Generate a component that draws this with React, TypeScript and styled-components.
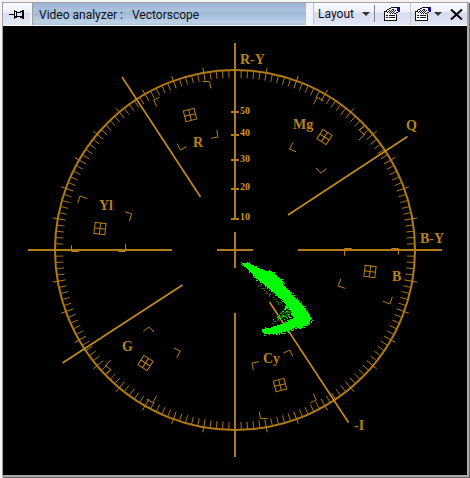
import React from "react";
import styled, { createGlobalStyle } from "styled-components";

const GlobalStyle = createGlobalStyle`
  *, *::before, *::after { box-sizing: border-box; }
  html, body, #root { height: 100%; }
  body { margin: 0; background: #fff; overflow: hidden; }
`;

const Page = styled.div`
  min-height: 100%;
  padding: 2px 0 0 2px;
  background: #f4f4f4;
`;

const Panel = styled.section`
  display: flex;
  flex-direction: column;
  border: 1px solid #a0a0a0;
  border-right: 2px solid #aaaaaa;
  border-bottom: 2px solid #a8a8a8;
  box-shadow: 1px 1px 0 #686868;
  margin-right: 1px;
  background: #000;
`;

const Toolbar = styled.header`
  display: flex;
  align-items: stretch;
  height: 23px;
  background: #f4f5fb;
  border-bottom: 1px solid #fff;
  font: 12px/22px Roboto, "Open Sans", sans-serif;
  color: #101014;
`;

const Group = styled.div`
  display: flex;
  align-items: stretch;
  background: linear-gradient(#fafbff 0%, #eef0fa 40%, #d6dbee 45%, #e0e5f5 100%);
  border-left: 1px solid #c4c6cc;
`;

const ToolButton = styled.button<{ $width: number; $gap?: number }>`
  display: flex;
  align-items: center;
  justify-content: center;
  gap: ${(p) => p.$gap ?? 0}px;
  width: ${(p) => p.$width}px;
  padding: 0;
  border: 0;
  background: transparent;
  font: inherit;
  color: inherit;
`;

const PinButton = styled(ToolButton)`
  background: linear-gradient(#fafbff 0%, #eef0fa 40%, #dce0f2 45%, #e0e5f5 100%);
`;

const Title = styled.h1`
  display: flex;
  flex: 1;
  gap: 9px;
  min-width: 0;
  margin: 0 7px 0 2px;
  padding: 0 6px;
  border-left: 1px solid #a0a0a0;
  font: inherit;
  line-height: 24px;
  white-space: nowrap;
  background: linear-gradient(#a0b0c8 0%, #9db8d8 8%, #abc3de 35%, #9fbad9 45%, #bed2e6 90%, #aac0da 100%);
`;

const Divider = styled.span`
  width: 1px;
  margin: 2px 0 3px;
  background: #85878f;
`;

const Scope = styled.svg`
  display: block;
  width: 100%;
  height: auto;
`;

const AxisLabel = styled.text`
  font: bold 14px "Liberation Serif", serif;
  fill: #b8811c;
`;

const ScaleLabel = styled.text`
  font: bold 10px "Liberation Serif", serif;
  fill: #d29322;
`;

const CX = 235;
const CY = 250;
const RADIUS = 180;

const ring = (from: number, to: number, keep: (d: number) => boolean) =>
  Array.from({ length: 180 }, (_, i) => i * 2)
    .filter(keep)
    .map((d) => {
      const c = Math.cos((d * Math.PI) / 180);
      const s = Math.sin((d * Math.PI) / 180);
      return `M${(CX + c * from).toFixed(2)} ${(CY + s * from).toFixed(2)}L${(CX + c * to).toFixed(2)} ${(CY + s * to).toFixed(2)}`;
    })
    .join("");

const minorTicks = ring(172, 180, (d) => d % 10 !== 0 && d % 90 !== 0);
const majorTicks = ring(172, 185, (d) => d % 10 === 0 && d % 90 !== 0);

const AXES =
  "M235 43V219M235 232V268M235 313V457M28 250H172M217 250H253M298 250H442" +
  "M231 112H239M231 135H239M231 160H239M231 189H239M231 219H239";

const DIAGONALS = "M122 77L200.5 197M269.5 302L348.5 422.5M288 215L407.5 136.5M62.5 363L182.5 285";

const BRACKETS =
  "M202.5 81.5L209.7 81.7L210.7 88.5M159.5 97.3L153.7 100L156.7 106.3" +
  "M177.3 143.7L180.3 150L186.7 146.7M216.7 130L218 137L211 138.3" +
  "M313.3 104.3L317.3 97.3L323.3 100.7M364 126.7L359.3 130.3L364.7 134.7L359 140" +
  "M293.3 142.3L289.5 149L296 151.8M316 168L321 173.2L326.5 168.5" +
  "M344.5 255.7V248.5H351.7M391.3 248.5H398.5V254.7" +
  "M340.7 279L338.3 286L345 288.3M382.7 301.3L390 304L392.3 296.7";

const targets = [
  { x: 190, y: 115, angle: -14 },
  { x: 324.5, y: 137, angle: 33 },
  { x: 370, y: 271.5, angle: 7 },
];

const labels = [
  { x: 240, y: 64, text: "R-Y" },
  { x: 420, y: 243, text: "B-Y" },
  { x: 406, y: 130, text: "Q" },
  { x: 354, y: 430, text: "-I" },
  { x: 193, y: 147, text: "R" },
  { x: 293, y: 129, text: "Mg" },
  { x: 392, y: 281, text: "B" },
  { x: 263, y: 363, text: "Cy" },
  { x: 122, y: 351, text: "G" },
  { x: 99, y: 210, text: "Yl" },
];

const scale = [
  { y: 114, text: "50" },
  { y: 136, text: "40" },
  { y: 162, text: "30" },
  { y: 190, text: "20" },
  { y: 220, text: "10" },
];

const outline: [number, number][] = [
  [241, 263], [248, 263], [256, 267], [266, 271], [272, 271], [274, 275], [281, 279],
  [284, 286], [291, 293], [296, 299], [304, 307], [308, 313], [311, 319], [309, 323],
  [301, 328], [294, 327], [291, 330], [276, 334], [264, 334], [262, 329], [269, 328],
  [279, 325], [287, 322], [294, 318], [291, 311], [286, 304], [280, 298], [272, 291],
  [266, 286], [258, 280], [250, 271], [243, 265],
];

const buildTrace = () => {
  let seed = 17;
  const random = () => {
    seed = (seed * 1103515245 + 12345) % 2147483648;
    return seed / 2147483648;
  };
  let bright = "";
  let dim = "";
  outline.forEach(([x, y], i) => {
    const [nx, ny] = outline[(i + 1) % outline.length];
    const steps = Math.ceil(Math.hypot(nx - x, ny - y));
    for (let k = 0; k < steps; k++) {
      const px = Math.round(x + ((nx - x) * k) / steps + (random() - 0.5) * 2.4);
      const py = Math.round(y + ((ny - y) * k) / steps + (random() - 0.5) * 2.4);
      bright += `M${px} ${py}h1v1h-1z`;
    }
  });
  for (let i = 0; i < 150; i++) {
    const t = random();
    const px = Math.round(291 - random() * (3 + t * 18));
    const py = Math.round(303 + t * 20);
    if (i % 3 === 0) bright += `M${px} ${py}h1v1h-1z`;
    else dim += `M${px} ${py}h1v1h-1z`;
  }
  for (let i = 0; i < 30; i++) {
    const t = random();
    dim += `M${Math.round(260 + t * 23 - random() * 3)} ${Math.round(284 + t * 21 + random() * 2)}h1v1h-1z`;
  }
  return { bright, dim };
};

const trace = buildTrace();
const traceShape = `M${outline.map((p) => p.join(" ")).join("L")}Z`;

const Graticule = () => (
  <g fill="none" stroke="#b07a16">
    <circle cx={CX} cy={CY} r={RADIUS} strokeWidth="2" />
    <path d={minorTicks} stroke="#a87414" />
    <path d={majorTicks} stroke="#b98118" />
    <path d={AXES} strokeWidth="2" shapeRendering="crispEdges" />
    <path d={DIAGONALS} stroke="#c68c1d" strokeWidth="1.6" />
    {[0, 180].map((turn) => (
      <g key={turn} transform={`rotate(${turn} ${CX} ${CY})`} stroke="#b98118">
        <path d={BRACKETS} />
        {targets.map((t) => (
          <path
            key={t.x}
            transform={`translate(${t.x} ${t.y}) rotate(${t.angle})`}
            d="M-5.5 -5.5H5.5V5.5H-5.5ZM-5.5 0H5.5M0 -5.5V5.5"
          />
        ))}
      </g>
    ))}
  </g>
);

const PinIcon = () => (
  <svg width="15" height="11" viewBox="0 0 15 11" shapeRendering="crispEdges" aria-hidden="true">
    <path
      d="M0 5h6v1H0zM5 1h1v9H5zM6 2h2v1H6zM7 3h5v1H7zM11 2h2v1h-2zM13 1h2v9h-2zM7 3h1v5H7zM6 7h7v1H6zM6 8h2v1H6zM11 8h2v1h-2z"
      fill="#000"
    />
  </svg>
);

const ArrowIcon = () => (
  <svg width="8" height="4" viewBox="0 0 8 4" aria-hidden="true">
    <path d="M0 0H8L4 4Z" fill="#303036" />
  </svg>
);

const PropertiesIcon = () => (
  <svg width="17" height="14" viewBox="0 0 17 14" shapeRendering="crispEdges" aria-hidden="true">
    <path d="M1 4H12V13H1Z" fill="#fff" />
    <path
      d="M0 4h3v1H1v8h11v1H0zM12 7h1v7h-1zM2 8h2v1H2zM2 10h2v1H2zM5 8h6v1H5zM5 10h6v1H5z"
      fill="#111"
    />
    <path d="M3 3L6 1H14V5L11 7H8L4 5Z" fill="#f4f4f6" />
    <path
      d="M5 1h2v1H5zM7 0h7v1H7zM3 2h2v1H3zM2 3h1v2H2zM3 5h1v1H3zM4 4h1v1H4zM5 3h1v1H5zM5 5h1v1H5zM6 4h1v1H6zM6 6h1v1H6zM7 3h1v1H7zM7 5h1v1H7zM8 4h1v1H8zM8 6h1v1H8zM9 3h1v1H9zM9 5h1v1H9zM10 4h1v1h-1zM10 6h2v1h-2zM12 5h2v1h-2zM8 2h2v1H8zM11 3h1v1h-1z"
      fill="#111"
    />
    <path d="M14 0h2v5h-2zM13 1h1v3h-1z" fill="#10108c" />
  </svg>
);

const CloseIcon = () => (
  <svg width="13" height="11" viewBox="0 0 13 11" aria-hidden="true">
    <path d="M1 0.5L12 10.5M12 0.5L1 10.5" stroke="#000" strokeWidth="2" />
  </svg>
);

export default function App() {
  return (
    <Page>
      <GlobalStyle />
      <Panel>
        <Toolbar>
          <PinButton $width={27} type="button" aria-label="Pin">
            <PinIcon />
          </PinButton>
          <Title>
            <span>Video analyzer :</span>
            <span>Vectorscope</span>
          </Title>
          <Group>
            <ToolButton $width={60} $gap={8} type="button">
              Layout
              <ArrowIcon />
            </ToolButton>
            <Divider />
            <ToolButton $width={35} type="button" aria-label="Properties">
              <PropertiesIcon />
            </ToolButton>
          </Group>
          <Group>
            <ToolButton $width={34} $gap={2} type="button" aria-label="Options">
              <PropertiesIcon />
              <ArrowIcon />
            </ToolButton>
            <ToolButton $width={22} type="button" aria-label="Close">
              <CloseIcon />
            </ToolButton>
          </Group>
        </Toolbar>
        <Scope viewBox="3 26 464 449" role="img" aria-label="Vectorscope">
          <Graticule />
          <g fill="#00ff00" shapeRendering="crispEdges">
            <path d={trace.dim} fill="#087a08" />
            <path d={traceShape} />
            <path d={trace.bright} />
          </g>
          {labels.map((l) => (
            <AxisLabel key={l.text} x={l.x} y={l.y}>
              {l.text}
            </AxisLabel>
          ))}
          {scale.map((l) => (
            <ScaleLabel key={l.text} x="240" y={l.y}>
              {l.text}
            </ScaleLabel>
          ))}
        </Scope>
      </Panel>
    </Page>
  );
}
